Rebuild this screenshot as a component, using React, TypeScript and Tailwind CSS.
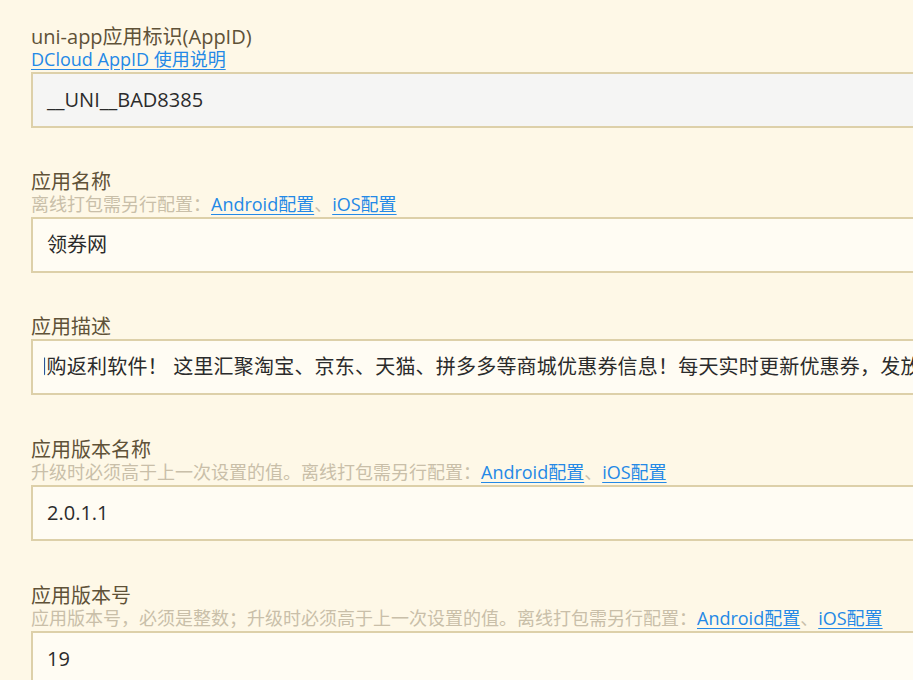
const desc =
  '领券网购返利软件！ 这里汇聚淘宝、京东、天猫、拼多多等商城优惠券信息！每天实时更新优惠券，发放大额隐藏优惠券，省钱又赚钱。'

function Label({ children }: { children: React.ReactNode }) {
  return <div className="text-[20px] leading-[22px] text-[#5f5238]">{children}</div>
}

function Hint({ children }: { children: React.ReactNode }) {
  return <div className="text-[18px] leading-[22px] text-[#c9bfa9] whitespace-nowrap">{children}</div>
}

function DocLink({ children }: { children: React.ReactNode }) {
  return <span className="text-[#2489e6] underline underline-offset-[3px]">{children}</span>
}

function ConfigLinks() {
  return (
    <>
      <DocLink>Android配置</DocLink>、<DocLink>iOS配置</DocLink>
    </>
  )
}

function Field({ value, readOnly }: { value: string; readOnly?: boolean }) {
  return (
    <div
      className={`mt-[2px] h-[56px] w-[1000px] border-2 border-[#ddd0a9] flex items-center pl-[14px] text-[20px] text-[#2b2b2b] ${
        readOnly ? 'bg-[#f5f5f4]' : 'bg-[#fffcf3]'
      }`}
    >
      {value}
    </div>
  )
}

export default function App() {
  return (
    <div className="h-[680px] w-full overflow-hidden bg-[#fef8e7] font-['Open_Sans','Noto_Sans_CJK_SC',sans-serif]">
      <div className="pl-[31px] pt-[26px]">
        {/* AppID */}
        <section>
          <Label>uni-app应用标识(AppID)</Label>
          <div className="text-[18px] leading-[22px]">
            <DocLink>DCloud AppID 使用说明</DocLink>
          </div>
          <Field value="__UNI__BAD8385" readOnly />
        </section>

        {/* 应用名称 */}
        <section className="mt-[43px]">
          <Label>应用名称</Label>
          <Hint>
            离线打包需另行配置：<ConfigLinks />
          </Hint>
          <Field value="领券网" />
        </section>

        {/* 应用描述 */}
        <section className="mt-[43px]">
          <Label>应用描述</Label>
          <div className="mt-px h-[56px] w-[1000px] border-2 border-[#ddd0a9] bg-[#fffcf3] flex items-center pl-[11px] text-[20px] text-[#2b2b2b]">
            <div className="flex-1 overflow-hidden whitespace-nowrap tracking-[0.2px]">
              <span className="ml-[-58px]">{desc}</span>
            </div>
          </div>
        </section>

        {/* 应用版本名称 */}
        <section className="mt-[44px]">
          <Label>应用版本名称</Label>
          <Hint>
            升级时必须高于上一次设置的值。离线打包需另行配置：<ConfigLinks />
          </Hint>
          <Field value="2.0.1.1" />
        </section>

        {/* 应用版本号 */}
        <section className="mt-[44px]">
          <Label>应用版本号</Label>
          <Hint>
            应用版本号，必须是整数；升级时必须高于上一次设置的值。离线打包需另行配置：<ConfigLinks />
          </Hint>
          <Field value="19" />
        </section>
      </div>
    </div>
  )
}
